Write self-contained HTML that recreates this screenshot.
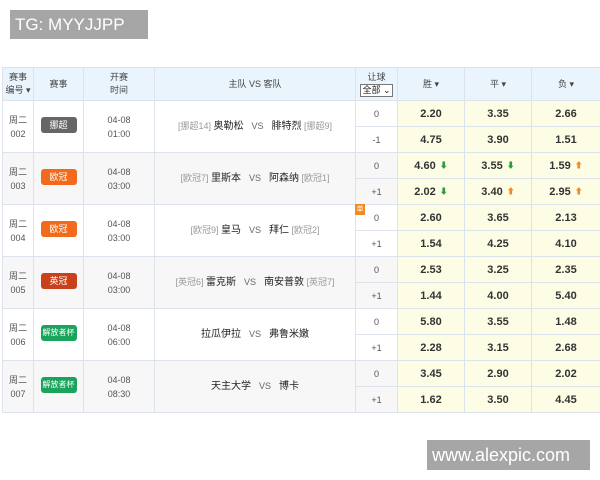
<!DOCTYPE html>
<html><head><meta charset="utf-8"><style>
*{margin:0;padding:0;box-sizing:border-box}
body{width:600px;height:480px;background:#fff;position:relative;overflow:hidden;font-family:"Liberation Sans","Noto Sans CJK SC",sans-serif;color:#333}
.wm{position:absolute;background:#a6a6a6;color:#fff;font-size:17px;line-height:29px;padding-left:5px}
table{position:absolute;left:2px;top:67px;border-collapse:collapse;table-layout:fixed;width:598px}
td,th{border:1px solid #dde3ea;text-align:center;font-size:9px;font-weight:normal;vertical-align:middle;padding:0}
th{background:#e9f4fc;height:33px;color:#444;line-height:13px}
td{height:26px;color:#555;line-height:14px}
tr.g td.b{background:#f7f7f7}
tr.w td.b{background:#fff}
td.o{background:#fdfde6;font-weight:bold;font-size:11px;color:#333}
.tag{display:inline-block;width:36px;height:16px;line-height:16px;border-radius:3px;color:#fff;font-size:9px;white-space:nowrap;overflow:hidden}
.tag.s{font-size:8px}
.dk{background:#666}.or{background:#f26b1d}.rd{background:#c9411a}.gn{background:#1aa35a}
.t{color:#999}.n{font-size:10px;color:#222}.vs{color:#666;margin:0 8px}
.sel{display:inline-block;border:1px solid #777;font-size:9px;padding:0 1px;line-height:11px;color:#222;background:#fff}
.dn,.up{font-size:8px;margin-left:4px;vertical-align:1px}
.dn{color:#2a9d3a}.up{color:#f08a24}
.badge{position:absolute;left:-1px;top:-1px;width:10px;height:11px;background:#f08a24;color:#fff;font-size:7px;line-height:11px;white-space:nowrap;overflow:hidden;text-align:center}
</style></head><body>
<div class="wm" style="left:10px;top:10px;width:138px">TG: MYYJJPP</div>
<div class="wm" style="left:427px;top:440px;width:163px;font-size:18px;line-height:30px">www.alexpic.com</div>
<table>
<colgroup><col style="width:31px"><col style="width:50px"><col style="width:71px"><col style="width:201px"><col style="width:42px"><col style="width:67px"><col style="width:67px"><col style="width:69px"></colgroup>
<tr><th>赛事<br>编号 ▾</th><th>赛事</th><th>开赛<br>时间</th><th>主队 VS 客队</th><th>让球<br><span class="sel">全部 ⌄</span></th><th>胜 ▾</th><th>平 ▾</th><th>负 ▾</th></tr>

<tr class="w"><td class="b" rowspan="2">周二<br>002</td><td class="b" rowspan="2"><span class="tag dk">挪超</span></td><td class="b" rowspan="2">04-08<br>01:00</td><td class="b" rowspan="2"><span class="t">[挪超14]</span> <span class="n">奥勒松</span><span class="vs">VS</span><span class="n">腓特烈</span> <span class="t">[挪超9]</span></td><td class="b">0</td><td class="o">2.20</td><td class="o">3.35</td><td class="o">2.66</td></tr>
<tr class="w"><td class="b">-1</td><td class="o">4.75</td><td class="o">3.90</td><td class="o">1.51</td></tr>

<tr class="g"><td class="b" rowspan="2">周二<br>003</td><td class="b" rowspan="2"><span class="tag or">欧冠</span></td><td class="b" rowspan="2">04-08<br>03:00</td><td class="b" rowspan="2"><span class="t">[欧冠7]</span> <span class="n">里斯本</span><span class="vs">VS</span><span class="n">阿森纳</span> <span class="t">[欧冠1]</span></td><td class="b">0</td><td class="o">4.60<span class="dn">⬇</span></td><td class="o">3.55<span class="dn">⬇</span></td><td class="o">1.59<span class="up">⬆</span></td></tr>
<tr class="g"><td class="b">+1</td><td class="o">2.02<span class="dn">⬇</span></td><td class="o">3.40<span class="up">⬆</span></td><td class="o">2.95<span class="up">⬆</span></td></tr>

<tr class="w"><td class="b" rowspan="2">周二<br>004</td><td class="b" rowspan="2"><span class="tag or">欧冠</span></td><td class="b" rowspan="2">04-08<br>03:00</td><td class="b" rowspan="2"><span class="t">[欧冠9]</span> <span class="n">皇马</span><span class="vs">VS</span><span class="n">拜仁</span> <span class="t">[欧冠2]</span></td><td class="b" style="position:relative">0<span class="badge">单</span></td><td class="o">2.60</td><td class="o">3.65</td><td class="o">2.13</td></tr>
<tr class="w"><td class="b">+1</td><td class="o">1.54</td><td class="o">4.25</td><td class="o">4.10</td></tr>

<tr class="g"><td class="b" rowspan="2">周二<br>005</td><td class="b" rowspan="2"><span class="tag rd">英冠</span></td><td class="b" rowspan="2">04-08<br>03:00</td><td class="b" rowspan="2"><span class="t">[英冠6]</span> <span class="n">雷克斯</span><span class="vs">VS</span><span class="n">南安普敦</span> <span class="t">[英冠7]</span></td><td class="b">0</td><td class="o">2.53</td><td class="o">3.25</td><td class="o">2.35</td></tr>
<tr class="g"><td class="b">+1</td><td class="o">1.44</td><td class="o">4.00</td><td class="o">5.40</td></tr>

<tr class="w"><td class="b" rowspan="2">周二<br>006</td><td class="b" rowspan="2"><span class="tag gn s">解放者杯</span></td><td class="b" rowspan="2">04-08<br>06:00</td><td class="b" rowspan="2"><span class="n">拉瓜伊拉</span><span class="vs">VS</span><span class="n">弗鲁米嫩</span></td><td class="b">0</td><td class="o">5.80</td><td class="o">3.55</td><td class="o">1.48</td></tr>
<tr class="w"><td class="b">+1</td><td class="o">2.28</td><td class="o">3.15</td><td class="o">2.68</td></tr>

<tr class="g"><td class="b" rowspan="2">周二<br>007</td><td class="b" rowspan="2"><span class="tag gn s">解放者杯</span></td><td class="b" rowspan="2">04-08<br>08:30</td><td class="b" rowspan="2"><span class="n">天主大学</span><span class="vs">VS</span><span class="n">博卡</span></td><td class="b">0</td><td class="o">3.45</td><td class="o">2.90</td><td class="o">2.02</td></tr>
<tr class="g"><td class="b">+1</td><td class="o">1.62</td><td class="o">3.50</td><td class="o">4.45</td></tr>
</table>
</body></html>
